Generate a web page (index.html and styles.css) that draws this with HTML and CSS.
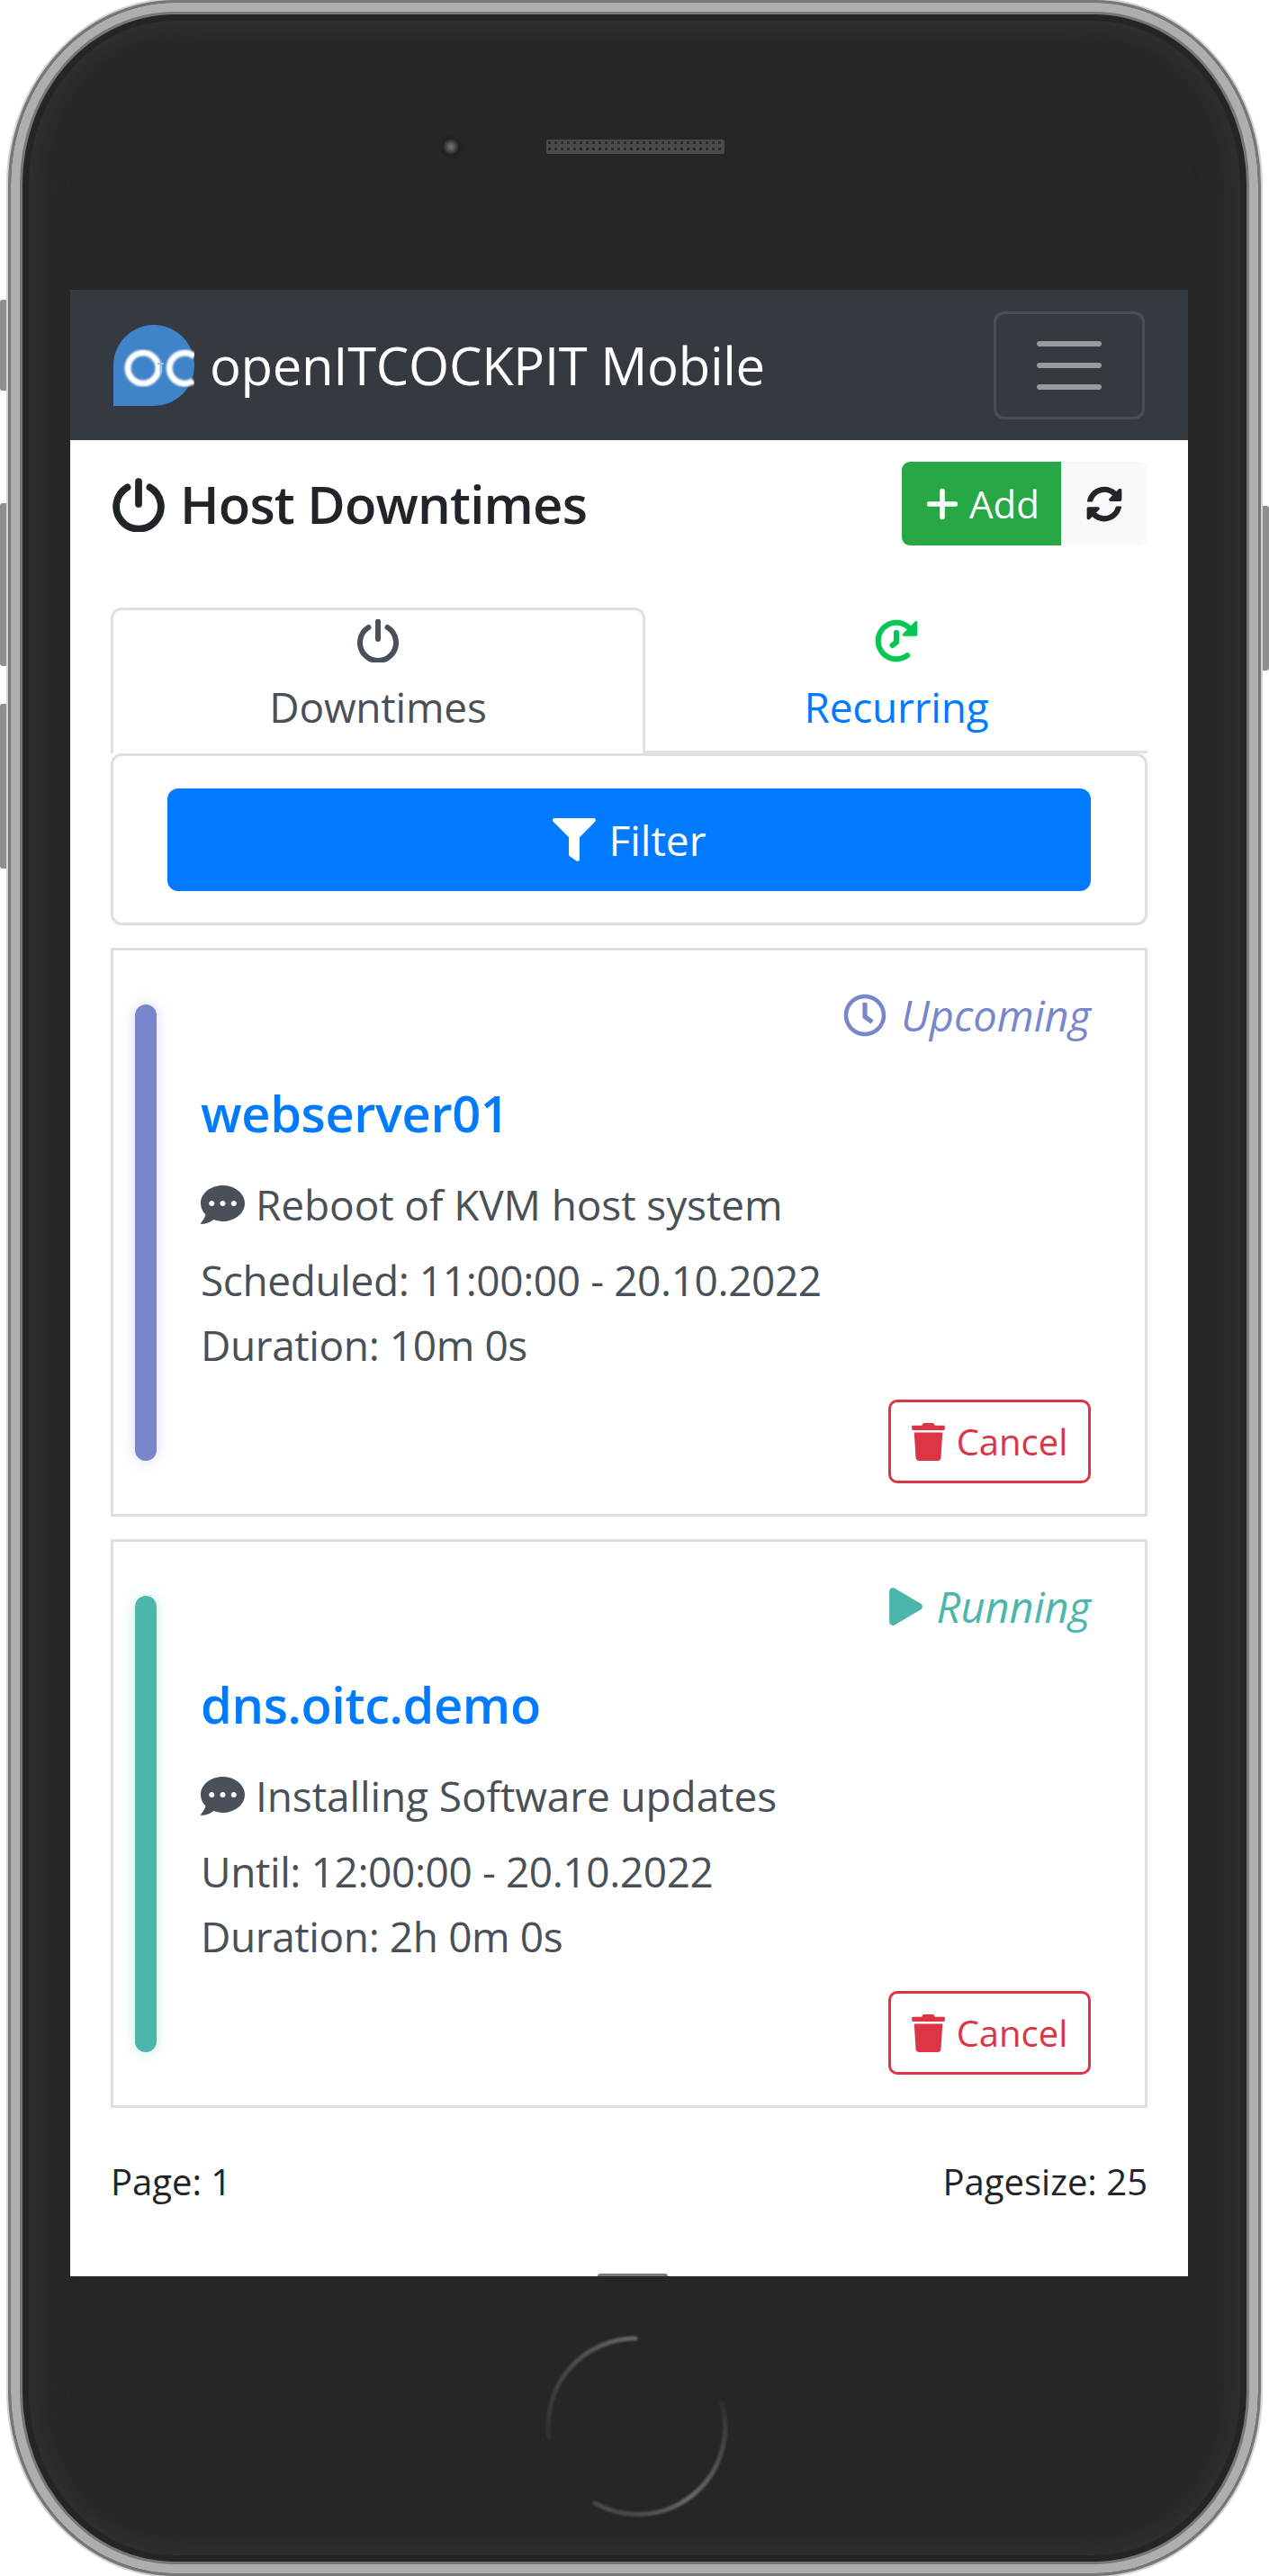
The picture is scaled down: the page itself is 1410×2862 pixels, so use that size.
FILE: index.html
```html
<!DOCTYPE html>
<html>
<head>
	<title>openITCOCKPIT Mobile - Host Downtimes</title>
	<link rel="stylesheet" href="styles.css">
</head>
<body>
	<div class="device">
		<div class="side-btn side-btn-1"></div>
		<div class="side-btn side-btn-2"></div>
		<div class="side-btn side-btn-3"></div>
		<div class="side-btn side-btn-r"></div>

		<div class="phone">
			<div class="phone-top">
				<div class="camera"></div>
				<div class="speaker"></div>
			</div>

			<div class="screen">
				<nav class="navbar">
					<a class="brand">
						<svg class="logo" viewBox="0 0 90 90">
							<defs><filter id="soft"><feGaussianBlur stdDeviation="1"/></filter></defs>
							<path d="M0 90V45A45 45 0 1 1 45 90Z" fill="#3f83c8"/>
							<g fill="none" stroke="#fff" stroke-width="7" filter="url(#soft)">
								<circle cx="33" cy="48" r="17"/>
								<path d="M90 35A17 17 0 1 0 89 62" />
							</g>
							<path d="M49 43h7M52.500 43v11" stroke="#9cc3ea" stroke-width="2" fill="none"/>
						</svg>
						<span>openITCOCKPIT Mobile</span>
					</a>
					<button class="toggler"><span></span><span></span><span></span></button>
				</nav>

				<main class="content">
					<div class="title-row">
						<h5 class="page-title">
							<svg class="title-icon" viewBox="0 0 56 58"><path d="M16 10A24 24 0 1 0 40 10M28 4V28" fill="none" stroke="currentColor" stroke-width="7.500" stroke-linecap="round"/></svg>
							Host Downtimes
						</h5>
						<div class="btn-group">
							<button class="btn btn-add">
								<svg class="plus-icon" viewBox="0 0 34 34"><path d="M17 2.500V31.500M2.500 17H31.500" stroke="#fff" stroke-width="5.500" stroke-linecap="round"/></svg>
								Add
							</button>
							<button class="btn btn-refresh">
								<svg class="refresh-icon" viewBox="0 0 512 512"><path fill="#212529" d="M370.720 133.280C339.458 104.008 298.888 87.962 255.848 88c-77.458.068-144.328 53.178-162.791 126.850-1.344 5.363-6.122 9.150-11.651 9.150H24.103c-7.498 0-13.194-6.807-11.807-14.176C33.933 94.924 134.813 8 256 8c66.448 0 126.791 26.136 171.315 68.685L463.030 40.970C478.149 25.851 504 36.559 504 57.941V192c0 13.255-10.745 24-24 24H345.941c-21.382 0-32.090-25.851-16.971-40.971l41.750-41.749zM32 296h134.059c21.382 0 32.090 25.851 16.971 40.971l-41.750 41.750c31.262 29.273 71.835 45.319 114.876 45.280 77.418-.07 144.315-53.144 162.787-126.849 1.344-5.363 6.122-9.150 11.651-9.150h57.304c7.498 0 13.194 6.807 11.807 14.176C478.067 417.076 377.187 504 256 504c-66.448 0-126.791-26.136-171.315-68.685L48.970 471.030C33.851 486.149 8 475.441 8 454.059V320c0-13.255 10.745-24 24-24z"/></svg>
							</button>
						</div>
					</div>

					<ul class="tabs">
						<li class="tab tab-active">
							<svg class="tab-icon" viewBox="0 0 48 48"><path d="M13.500 9A20 20 0 1 0 34.500 9M24 2.500V22" fill="none" stroke="#495057" stroke-width="6" stroke-linecap="round"/></svg>
							<span>Downtimes</span>
						</li>
						<li class="tab tab-other">
							<svg class="tab-icon" viewBox="0 0 512 512"><path fill="#00c851" transform="translate(512 0) scale(-1 1)" d="M504 255.531c.253 136.640-111.180 248.372-247.820 248.468-59.015.042-113.223-20.530-155.822-54.911-11.077-8.940-11.905-25.541-1.839-35.607l11.267-11.267c8.609-8.609 22.353-9.551 31.891-1.984C173.062 425.135 212.781 440 256 440c101.705 0 184-82.311 184-184 0-101.705-82.311-184-184-184-48.814 0-93.149 18.969-126.068 49.932l50.754 50.754c10.080 10.080 2.941 27.314-11.313 27.314H24c-8.837 0-16-7.163-16-16V38.627c0-14.254 17.234-21.393 27.314-11.314l49.372 49.372C129.209 34.136 189.552 8 256 8c136.810 0 247.747 110.780 248 247.531zm-180.912 78.784l9.823-12.630c8.138-10.463 6.253-25.542-4.210-33.679L288 256.349V152c0-13.255-10.745-24-24-24h-16c-13.255 0-24 10.745-24 24v135.651l65.409 50.874c10.463 8.137 25.541 6.253 33.679-4.210z"/></svg>
							<span>Recurring</span>
						</li>
					</ul>

					<div class="filter-card">
						<button class="btn-filter">
							<svg class="filter-icon" viewBox="0 0 512 512"><path fill="#fff" d="M487.976 0H24.028C2.710 0-8.047 25.866 7.058 40.971L192 225.941V432c0 7.831 3.821 15.170 10.237 19.662l80 55.980C298.020 518.690 320 507.493 320 487.980V225.941l184.947-184.970C520.021 25.896 509.338 0 487.976 0z"/></svg>
							Filter
						</button>
					</div>

					<div class="dt-card">
						<div class="dt-bar bar-upcoming"></div>
						<div class="dt-body">
							<div class="dt-status status-upcoming">
								<svg class="clock-icon" viewBox="0 0 512 512"><path fill="#7986cb" d="M256 8C119 8 8 119 8 256s111 248 248 248 248-111 248-248S393 8 256 8zm0 448c-110.500 0-200-89.500-200-200S145.500 56 256 56s200 89.500 200 200-89.500 200-200 200zm61.800-104.400l-84.900-61.700c-3.100-2.300-4.900-5.900-4.900-9.700V116c0-6.600 5.400-12 12-12h32c6.600 0 12 5.400 12 12v141.700l66.800 48.600c5.400 3.900 6.500 11.400 2.600 16.800L334.600 349c-3.900 5.300-11.400 6.500-16.800 2.600z"/></svg>
								<i>Upcoming</i>
							</div>
							<a class="dt-host">webserver01</a>
							<div class="dt-comment">
								<svg class="comment-icon" viewBox="0 0 512 448"><path fill="#495057" transform="translate(0 -32)" d="M256 32C114.600 32 0 125.100 0 240c0 49.600 21.400 95 57 130.700C44.500 421.100 2.700 466 2.200 466.500c-2.200 2.300-2.800 5.700-1.500 8.700S4.800 480 8 480c66.300 0 116-31.800 140.600-51.400 32.700 12.300 69 19.400 107.400 19.400 141.400 0 256-93.100 256-208S397.400 32 256 32zM128 272c-17.700 0-32-14.300-32-32s14.300-32 32-32 32 14.300 32 32-14.300 32-32 32zm128 0c-17.700 0-32-14.300-32-32s14.300-32 32-32 32 14.300 32 32-14.300 32-32 32zm128 0c-17.700 0-32-14.300-32-32s14.300-32 32-32 32 14.300 32 32-14.300 32-32 32z"/></svg>
								Reboot of KVM host system
							</div>
							<div class="dt-line">Scheduled: 11:00:00 - 20.10.2022</div>
							<div class="dt-line">Duration: 10m 0s</div>
							<div class="dt-actions">
								<button class="btn-cancel">
									<svg class="trash-icon" viewBox="0 0 448 512"><path fill="#dc3545" d="M432 32H312l-9.400-18.700A24 24 0 0 0 281.100 0H166.800a23.720 23.720 0 0 0-21.400 13.300L136 32H16A16 16 0 0 0 0 48v32a16 16 0 0 0 16 16h416a16 16 0 0 0 16-16V48a16 16 0 0 0-16-16zM53.200 467a48 48 0 0 0 47.900 45h245.800a48 48 0 0 0 47.900-45L416 128H32z"/></svg>
									Cancel
								</button>
							</div>
						</div>
					</div>

					<div class="dt-card">
						<div class="dt-bar bar-running"></div>
						<div class="dt-body">
							<div class="dt-status status-running">
								<svg class="play-icon" viewBox="0 0 448 512"><path fill="#4db6ac" d="M424.400 214.700L72.400 6.600C43.800-10.300 0 6.100 0 47.900V464c0 37.500 40.700 60.100 72.400 41.300l352-208c31.400-18.500 31.500-64.100 0-82.600z"/></svg>
								<i>Running</i>
							</div>
							<a class="dt-host">dns.oitc.demo</a>
							<div class="dt-comment">
								<svg class="comment-icon" viewBox="0 0 512 448"><path fill="#495057" transform="translate(0 -32)" d="M256 32C114.600 32 0 125.100 0 240c0 49.600 21.400 95 57 130.700C44.500 421.100 2.700 466 2.200 466.500c-2.200 2.300-2.800 5.700-1.500 8.700S4.800 480 8 480c66.300 0 116-31.800 140.600-51.400 32.700 12.300 69 19.400 107.400 19.400 141.400 0 256-93.100 256-208S397.400 32 256 32zM128 272c-17.700 0-32-14.300-32-32s14.300-32 32-32 32 14.300 32 32-14.300 32-32 32zm128 0c-17.700 0-32-14.300-32-32s14.300-32 32-32 32 14.300 32 32-14.300 32-32 32zm128 0c-17.700 0-32-14.300-32-32s14.300-32 32-32 32 14.300 32 32-14.300 32-32 32z"/></svg>
								Installing Software updates
							</div>
							<div class="dt-line">Until: 12:00:00 - 20.10.2022</div>
							<div class="dt-line">Duration: 2h 0m 0s</div>
							<div class="dt-actions">
								<button class="btn-cancel">
									<svg class="trash-icon" viewBox="0 0 448 512"><path fill="#dc3545" d="M432 32H312l-9.400-18.700A24 24 0 0 0 281.100 0H166.800a23.720 23.720 0 0 0-21.400 13.300L136 32H16A16 16 0 0 0 0 48v32a16 16 0 0 0 16 16h416a16 16 0 0 0 16-16V48a16 16 0 0 0-16-16zM53.200 467a48 48 0 0 0 47.900 45h245.800a48 48 0 0 0 47.900-45L416 128H32z"/></svg>
									Cancel
								</button>
							</div>
						</div>
					</div>

					<div class="pager">
						<span>Page: 1</span>
						<span>Pagesize: 25</span>
					</div>
				</main>
				<div class="screen-notch"></div>
			</div>

			<div class="phone-bottom">
				<svg class="home-btn" viewBox="0 0 210 210">
					<defs>
						<filter id="ring"><feGaussianBlur stdDeviation="1"/></filter>
						<linearGradient id="ring-a" x1="1" y1="0" x2="0" y2="1">
							<stop offset="0" stop-color="#666"/>
							<stop offset="1" stop-color="#303030"/>
						</linearGradient>
						<linearGradient id="ring-b" x1="1" y1="0" x2="0.300" y2="1">
							<stop offset="0" stop-color="#303030"/>
							<stop offset="0.700" stop-color="#6a6a6a"/>
							<stop offset="1" stop-color="#4a4a4a"/>
						</linearGradient>
					</defs>
					<g fill="none" stroke-width="5" stroke-linecap="round" filter="url(#ring)">
						<path stroke="url(#ring-a)" d="M105 8A97 97 0 0 0 9 118" />
						<path stroke="url(#ring-b)" d="M201 80A97 97 0 0 1 60 191" />
					</g>
				</svg>
			</div>
		</div>
	</div>
</body>
</html>
```
FILE: styles.css
```css
html, body {
	margin: 0;
	padding: 0;
	background: #fff;
}
body {
	font-family: "Open Sans", "Noto Sans", sans-serif;
	font-size: 46px;
	line-height: 72px;
	color: #495057;
}
button {
	font-family: inherit;
	cursor: pointer;
}

/* device frame */
.device {
	position: relative;
	width: 1410px;
	height: 2862px;
	overflow: hidden;
}
.phone {
	position: relative;
	box-sizing: border-box;
	width: 1392px;
	height: 2862px;
	margin-left: 9px;
	border: 3px solid #777;
	border-radius: 185px / 205px;
	background: #262626;
	box-shadow:
		0 0 0 2px #d4d4d4,
		inset 0 0 0 10px #aeaeae,
		inset 0 0 0 13px #777,
		inset 0 0 0 20px #252525,
		inset 0 0 40px 24px #343434;
}
.side-btn {
	position: absolute;
	left: 0;
	width: 12px;
	background: #8f8f8f;
	border-radius: 3px 0 0 3px;
}
.side-btn-1 { top: 333px; height: 101px; }
.side-btn-2 { top: 559px; height: 181px; }
.side-btn-3 { top: 782px; height: 183px; }
.side-btn-r {
	left: auto;
	right: 0;
	width: 11px;
	top: 562px;
	height: 183px;
	border-radius: 0 3px 3px 0;
}

.phone-top {
	display: flex;
	align-items: center;
	box-sizing: border-box;
	height: 319px;
	padding-left: 476px;
}
.camera {
	width: 26px;
	height: 26px;
	border-radius: 50%;
	background: radial-gradient(circle, #777 0, #555 22%, #1d2024 50%, #2b2b2b 100%);
}
.speaker {
	width: 198px;
	height: 16px;
	margin-left: 93px;
	background-color: #4a4a4a;
	background-image: radial-gradient(circle, #2a2a2a 1.400px, transparent 1.800px);
	background-size: 7px 7px;
	border-radius: 2px;
}
.phone-bottom {
	display: flex;
	justify-content: flex-start;
	padding: 61px 0 0 589px;
}
.home-btn {
	width: 210px;
	height: 210px;
}

/* screen */
.screen {
	position: relative;
	display: flex;
	flex-direction: column;
	width: 1242px;
	height: 2207px;
	margin-left: 66px;
	background: #fff;
}
.screen-notch {
	position: absolute;
	left: 586px;
	bottom: 0;
	width: 78px;
	height: 3px;
	background: #7a7a7a;
	border-radius: 3px 3px 0 0;
}

.navbar {
	display: flex;
	align-items: center;
	justify-content: space-between;
	height: 167px;
	padding: 0 48px;
	background: #343a40;
}
.brand {
	display: flex;
	align-items: center;
	color: #fff;
	font-size: 58px;
	line-height: 90px;
	letter-spacing: -0.300px;
}
.logo {
	width: 90px;
	height: 90px;
	margin-right: 17px;
}
.toggler {
	display: flex;
	flex-direction: column;
	align-items: center;
	justify-content: center;
	gap: 18px;
	box-sizing: border-box;
	width: 168px;
	height: 120px;
	padding: 0;
	background: transparent;
	border: 3px solid #4a4f54;
	border-radius: 12px;
}
.toggler span {
	display: block;
	width: 72px;
	height: 6px;
	background: #9a9b9d;
	border-radius: 3px;
}

.content {
	display: flex;
	flex-direction: column;
	padding: 24px 45px 0;
}
.title-row {
	display: flex;
	align-items: center;
	justify-content: space-between;
	margin-bottom: 69px;
}
.page-title {
	display: flex;
	align-items: center;
	margin: 0;
	font-size: 58px;
	font-weight: 600;
	line-height: 72px;
	color: #212529;
	letter-spacing: -0.800px;
}
.title-icon {
	width: 58px;
	height: 60px;
	margin: 2px 17px 0 2px;
}
.btn-group {
	display: flex;
}
.btn {
	display: flex;
	align-items: center;
	justify-content: center;
	height: 93px;
	padding: 0;
	border: 0;
	font-size: 42px;
	line-height: 63px;
}
.btn-add {
	box-sizing: border-box;
	width: 177px;
	gap: 13px;
	padding-left: 4px;
	background: #28a745;
	color: #fff;
	border-radius: 9px 0 0 9px;
}
.plus-icon {
	width: 34px;
	height: 34px;
}
.btn-refresh {
	width: 96px;
	background: #f8f9fa;
	border-radius: 0 9px 9px 0;
}
.refresh-icon {
	width: 40px;
	height: 40px;
}

/* tabs */
.tabs {
	display: flex;
	height: 162px;
	margin: 0;
	padding: 0;
	list-style: none;
	border-bottom: 3px solid #dee2e6;
	box-sizing: border-box;
}
.tab {
	display: flex;
	flex-direction: column;
	align-items: center;
	box-sizing: border-box;
	height: 162px;
	padding-top: 10px;
}
.tab span {
	font-size: 46px;
	line-height: 72px;
	margin-top: 13px;
	letter-spacing: -0.200px;
}
.tab-active {
	width: 594px;
	border: 3px solid #dee2e6;
	border-bottom: 0;
	border-radius: 12px 12px 0 0;
	background: #fff;
	color: #495057;
}
.tab-other {
	flex: 1;
	padding-top: 13px;
	color: #007bff;
}
.tab-icon {
	display: block;
	width: 48px;
	height: 48px;
}

.filter-card {
	box-sizing: border-box;
	height: 191px;
	margin-bottom: 25px;
	padding: 36px 60px;
	border: 3px solid #dfdfdf;
	border-radius: 12px;
}
.btn-filter {
	display: flex;
	align-items: center;
	justify-content: center;
	gap: 15px;
	width: 100%;
	height: 114px;
	padding: 0;
	border: 0;
	border-radius: 12px;
	background: #007bff;
	color: #fff;
	font-size: 46px;
}
.filter-icon {
	width: 48px;
	height: 48px;
}

/* downtime cards */
.dt-card {
	display: flex;
	box-sizing: border-box;
	height: 632px;
	margin-bottom: 25px;
	padding: 0 60px 0 24px;
	border: 3px solid #dfdfdf;
}
.dt-bar {
	flex: none;
	width: 24px;
	margin: 60px 0 59px;
	border-radius: 12px;
}
.bar-upcoming {
	background: #7986cb;
	box-shadow: 0 0 15px rgba(121, 134, 203, 0.3);
}
.bar-running {
	background: #4db6ac;
	box-shadow: 0 0 15px rgba(77, 182, 172, 0.3);
}
.dt-body {
	flex: 1;
	display: flex;
	flex-direction: column;
	margin-left: 49px;
	padding-top: 36px;
}
.dt-status {
	display: flex;
	align-items: center;
	justify-content: flex-end;
	gap: 16px;
	height: 72px;
	font-size: 47px;
}
.status-upcoming { color: #7986cb; }
.status-running { color: #4db6ac; }
.clock-icon {
	width: 48px;
	height: 48px;
}
.play-icon {
	width: 37px;
	height: 42px;
}
.dt-host {
	margin-top: 36px;
	font-size: 56px;
	font-weight: 600;
	line-height: 72px;
	letter-spacing: -0.400px;
	color: #007bff;
}
.dt-comment {
	display: flex;
	align-items: center;
	gap: 12px;
	margin-top: 30px;
	letter-spacing: -0.100px;
}
.comment-icon {
	width: 49px;
	height: 43px;
}
.dt-line {
	letter-spacing: -0.400px;
}
.dt-comment + .dt-line {
	margin-top: 12px;
}
.dt-actions {
	display: flex;
	justify-content: flex-end;
	margin-top: 25px;
}
.btn-cancel {
	display: flex;
	align-items: center;
	justify-content: center;
	gap: 13px;
	box-sizing: border-box;
	width: 225px;
	height: 93px;
	padding: 0;
	background: #fff;
	border: 3px solid #dc3545;
	border-radius: 10px;
	color: #dc3545;
	font-size: 40px;
}
.trash-icon {
	width: 37px;
	height: 42px;
}

.pager {
	display: flex;
	justify-content: space-between;
	margin-top: 25px;
	font-size: 40px;
	line-height: 63px;
	color: #212529;
}
```
